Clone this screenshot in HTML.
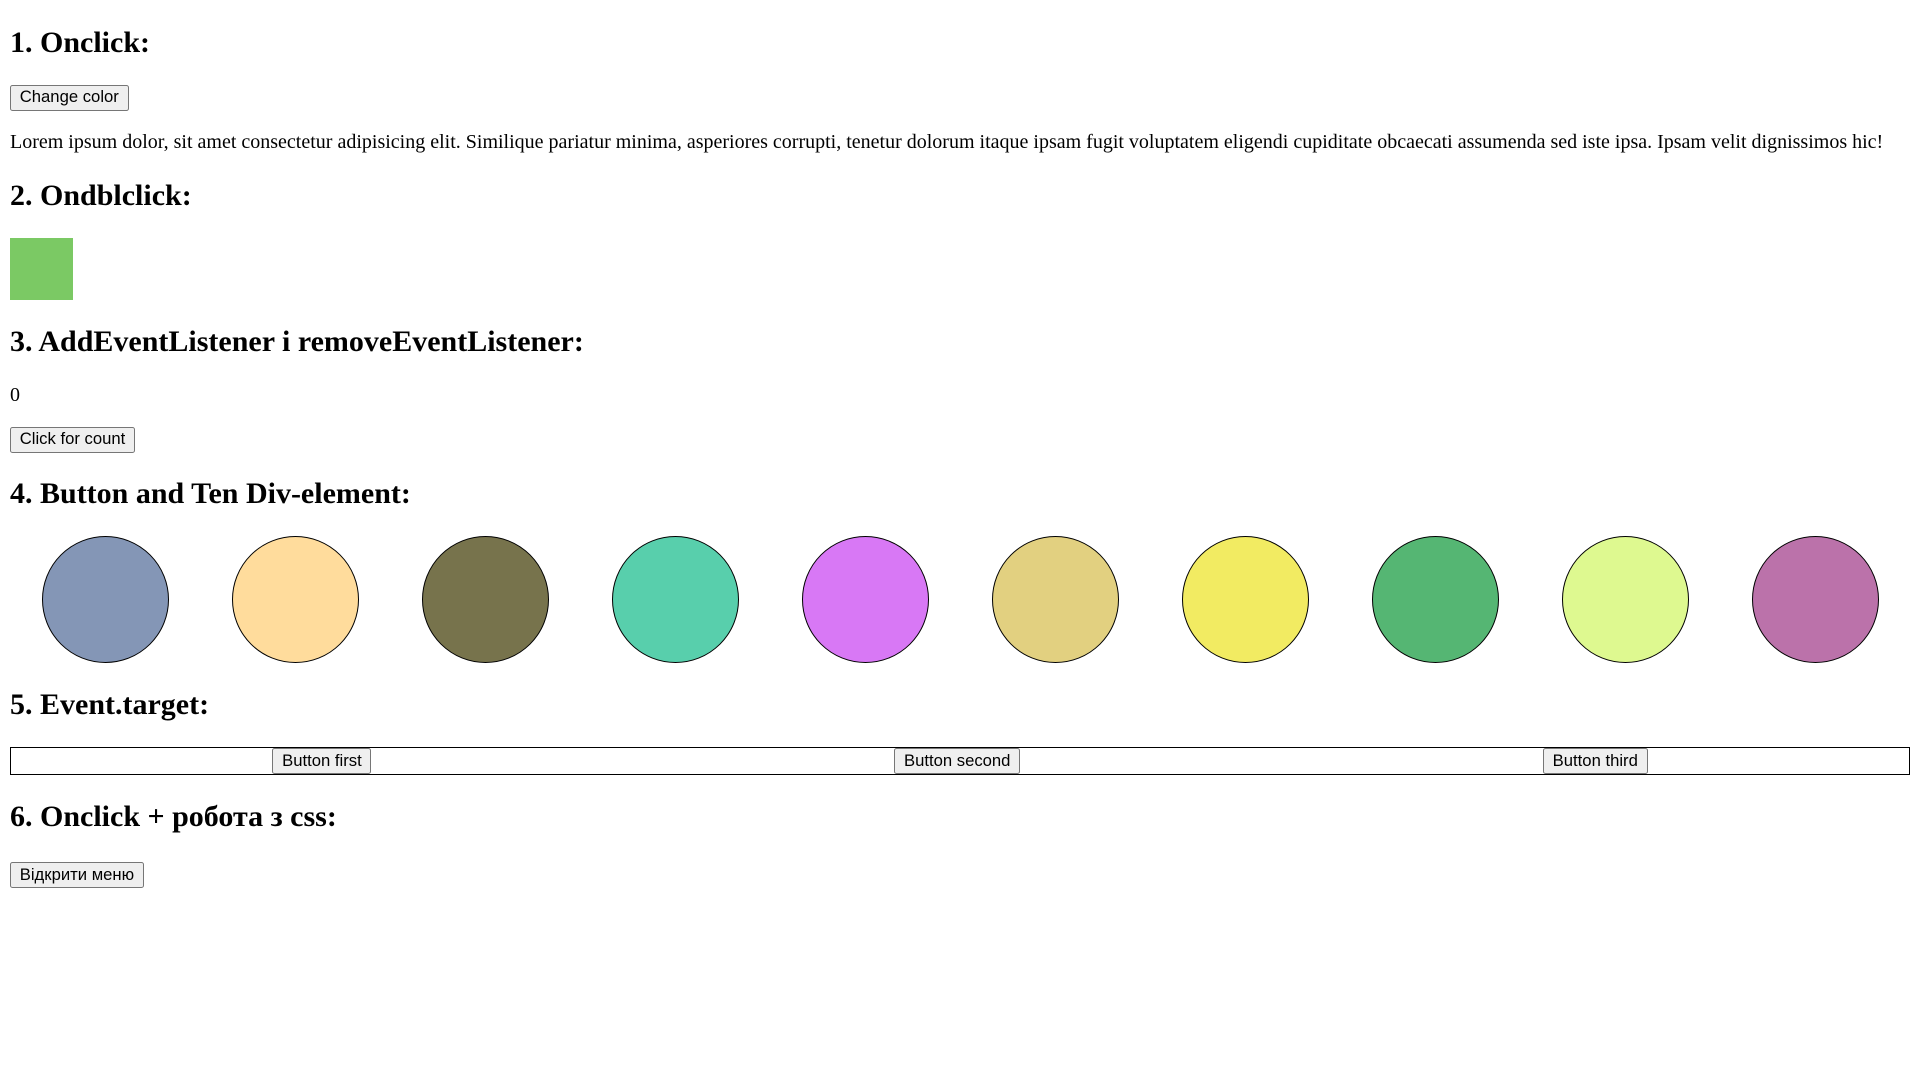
<!DOCTYPE html>
<html><head><meta charset="utf-8"><style>
html{zoom:1.25}
body{margin:8px;font-family:"Liberation Sans","Liberation Serif","Noto Serif CJK SC",serif;font-family:"Liberation Serif","Noto Serif CJK SC",serif;font-size:16px;color:#000;background:#fff}
h2{font-size:1.5em;margin:0.83em 0;font-weight:bold}
p{margin:1em 0}
button{font-family:"Liberation Sans",Arial,sans-serif;font-size:13.333px;padding:2px 7px;line-height:15px;border:1px solid #767676;border-radius:2px;background:#efefef;color:#000;margin:0}
.sq{width:50px;height:50px;background:#7bc964}
.circles{display:flex;justify-content:space-around}
.c{width:100px;height:100px;border:1px solid #000;border-radius:50%}
.box{border:1px solid #000;display:flex;justify-content:space-around}
</style></head><body>
<h2 style="margin-top:0.87em">1. Onclick:</h2>
<button>Change color</button>
<p>Lorem ipsum dolor, sit amet consectetur adipisicing elit. Similique pariatur minima, asperiores corrupti, tenetur dolorum itaque ipsam fugit voluptatem eligendi cupiditate obcaecati assumenda sed iste ipsa. Ipsam velit dignissimos hic!</p>
<h2>2. Ondblclick:</h2>
<div class="sq"></div>
<h2>3. AddEventListener і removeEventListener:</h2>
<p>0</p>
<button>Click for count</button>
<h2>4. Button and Ten Div-element:</h2>
<div class="circles">
<div class="c" style="background:#8496b6"></div>
<div class="c" style="background:#ffdc9c"></div>
<div class="c" style="background:#77734c"></div>
<div class="c" style="background:#58cfac"></div>
<div class="c" style="background:#d878f5"></div>
<div class="c" style="background:#e2d080"></div>
<div class="c" style="background:#f2eb62"></div>
<div class="c" style="background:#55b673"></div>
<div class="c" style="background:#def990"></div>
<div class="c" style="background:#bb72aa"></div>
</div>
<h2>5. Event.target:</h2>
<div class="box"><button>Button first</button><button>Button second</button><button>Button third</button></div>
<h2>6. Onclick + робота з css:</h2>
<button style="margin-top:3px">Відкрити меню</button>
</body></html>
